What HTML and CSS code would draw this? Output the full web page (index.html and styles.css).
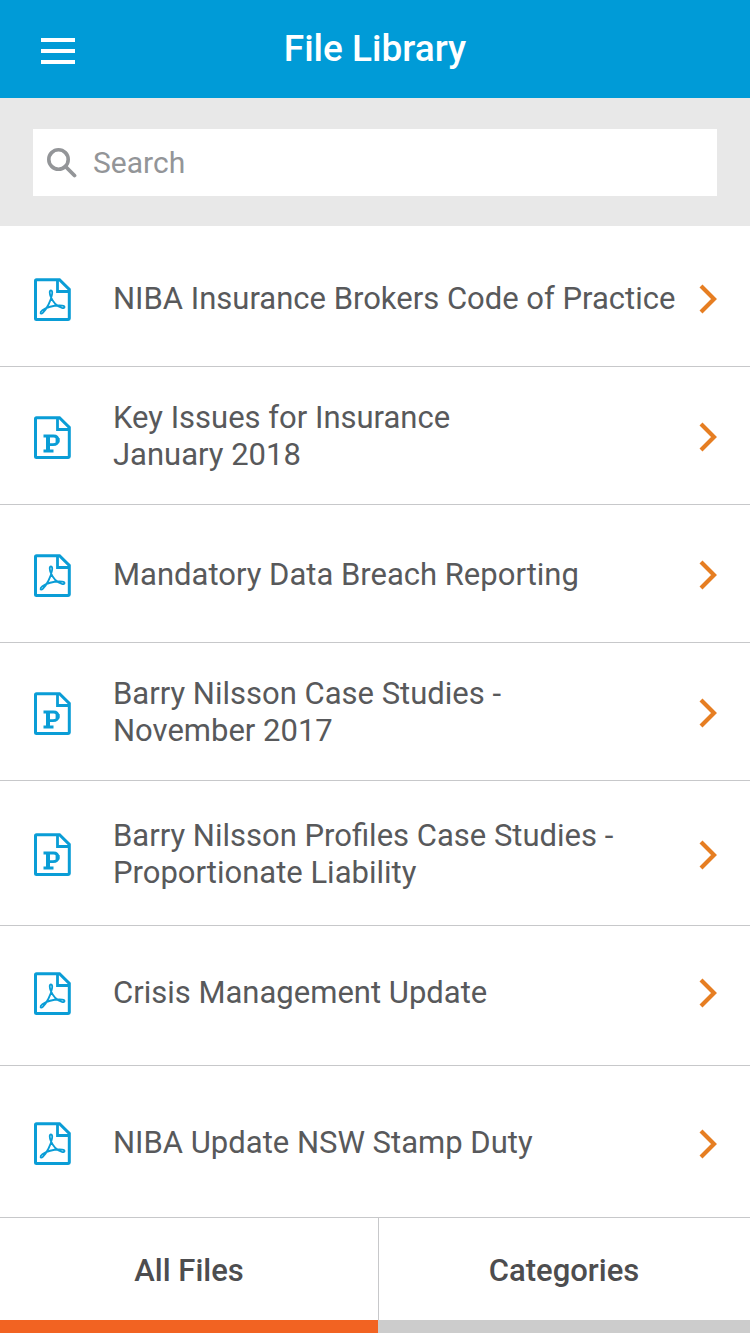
FILE: index.html
```html
<!DOCTYPE html>
<html lang="en">
<head>
  <meta charset="UTF-8" />
  <meta name="viewport" content="width=device-width, initial-scale=1" />
  <title>File Library</title>
  <link rel="stylesheet" href="styles.css">
</head>
<body>
  <svg class="sprite" aria-hidden="true">
    <symbol id="page" viewBox="0 0 38 43">
      <path d="M3.5 1.8H26.5L36.3 11.5V40.5Q36.3 41.4 35.3 41.4H3.5Q2.5 41.4 2.5 40.4V2.8Q2.5 1.8 3.5 1.8Z" fill="none" stroke="currentColor" stroke-width="3" />
      <path d="M24.5 2V13.5H36" fill="none" stroke="currentColor" stroke-width="2.8" />
    </symbol>
    <symbol id="pdf" viewBox="0 0 38 43">
      <use href="#page" />
      <path d="M18 12.5C16.2 12.5 16.5 15.7 17.8 18.8C19.8 23.7 24.2 28.5 29 29.9C32.2 30.7 32.4 27.9 29.2 27.6C22.5 27.2 14 29.1 9.4 32.2C6.4 34.4 7.4 37 9.8 34.8C13.8 31 18 22.5 19 16.7C19.5 14.1 19.2 12.5 18 12.5Z" fill="none" stroke="currentColor" stroke-width="1.8" stroke-linejoin="round" />
    </symbol>
    <symbol id="ppt" viewBox="0 0 38 43">
      <use href="#page" />
      <path d="M10.5 20H20.5Q25 20 25 24.2Q25 28.6 20 28.6H15M10.5 35H20.5" fill="none" stroke="currentColor" stroke-width="2.8" />
      <path d="M15 19V35.5M24.6 22V26.5" stroke="currentColor" stroke-width="4" />
    </symbol>
    <symbol id="chevron" viewBox="0 0 18 30">
      <path d="M2 2L15 15L2 28" fill="none" stroke="currentColor" stroke-width="4.2" />
    </symbol>
  </svg>

  <header class="topbar">
    <button class="menu-btn" type="button" aria-label="Menu">
      <span></span><span></span><span></span>
    </button>
    <h1>File Library</h1>
  </header>

  <form class="search">
    <label class="search-box">
      <svg class="search-icon" viewBox="0 0 30 30" aria-hidden="true">
        <circle cx="11.5" cy="11.5" r="9.7" fill="none" stroke="currentColor" stroke-width="3.6" />
        <path d="M18.5 18.5L27.5 27.5" stroke="currentColor" stroke-width="3.8" stroke-linecap="round" />
      </svg>
      <input type="search" placeholder="Search" aria-label="Search" />
    </label>
  </form>

  <main class="file-list">
    <a class="file file-first" href="#">
      <svg class="file-icon"><use href="#pdf" /></svg>
      <span class="file-name">NIBA Insurance Brokers Code of Practice</span>
      <svg class="chevron"><use href="#chevron" /></svg>
    </a>
    <a class="file" href="#">
      <svg class="file-icon"><use href="#ppt" /></svg>
      <span class="file-name">Key Issues for Insurance<br>January 2018</span>
      <svg class="chevron"><use href="#chevron" /></svg>
    </a>
    <a class="file" href="#">
      <svg class="file-icon"><use href="#pdf" /></svg>
      <span class="file-name">Mandatory Data Breach Reporting</span>
      <svg class="chevron"><use href="#chevron" /></svg>
    </a>
    <a class="file" href="#">
      <svg class="file-icon"><use href="#ppt" /></svg>
      <span class="file-name">Barry Nilsson Case Studies -<br>November 2017</span>
      <svg class="chevron"><use href="#chevron" /></svg>
    </a>
    <a class="file file-tall" href="#">
      <svg class="file-icon"><use href="#ppt" /></svg>
      <span class="file-name">Barry Nilsson Profiles Case Studies -<br>Proportionate Liability</span>
      <svg class="chevron"><use href="#chevron" /></svg>
    </a>
    <a class="file file-raised" href="#">
      <svg class="file-icon"><use href="#pdf" /></svg>
      <span class="file-name">Crisis Management Update</span>
      <svg class="chevron"><use href="#chevron" /></svg>
    </a>
    <a class="file file-last" href="#">
      <svg class="file-icon"><use href="#pdf" /></svg>
      <span class="file-name">NIBA Update NSW Stamp Duty</span>
      <svg class="chevron"><use href="#chevron" /></svg>
    </a>
  </main>

  <nav class="tabs">
    <button class="tab active" type="button">All Files</button>
    <button class="tab" type="button">Categories</button>
  </nav>
</body>
</html>
```
FILE: styles.css
```css
* { box-sizing: border-box; }
body {
  margin: 0;
  font-family: Roboto, "Liberation Sans", sans-serif;
  background: #fff; color: #58595b;
  display: flex; flex-direction: column;
  min-height: 100vh;
}
.sprite { display: none; }

.topbar {
  display: grid; grid-template-columns: 34px 1fr 34px; align-items: center;
  padding: 24px 41px;
  background: #009bd7; color: #fff;
}
.topbar h1 { margin: 0; font-size: 37px; line-height: 50px; font-weight: 500; text-align: center; }
.menu-btn {
  display: flex; flex-direction: column; gap: 7px;
  padding: 4px 0 0; border: none; background: none; cursor: pointer;
}
.menu-btn span { width: 34px; height: 4px; background: #fff; }

.search { padding: 31px 33px 30px; background: #e8e8e8; }
.search-box {
  display: flex; align-items: center; gap: 16px;
  height: 67px; padding: 0 14px;
  background: #fff; color: #939598;
}
.search-icon { width: 30px; height: 30px; flex: none; }
.search-box input {
  flex: 1; min-width: 0; padding: 0; border: none; outline: none;
  background: none; color: #58595b;
  font-family: inherit; font-size: 30px; line-height: 37px;
}
.search-box input::placeholder { color: #939598; opacity: 1; }

.file-list { flex: 1; }
.file {
  display: flex; align-items: center;
  min-height: 138px; padding: 3px 33px 0;
  border-bottom: 1px solid #c7c8ca;
  color: inherit; text-decoration: none;
}
.file-first { min-height: 141px; padding-top: 6px; }
.file-tall { min-height: 145px; }
.file-raised { min-height: 140px; padding: 0 33px 5px; }
.file-last { min-height: 152px; padding-top: 4px; }
.file-icon { width: 38px; height: 43px; flex: none; margin-right: 42px; color: #0a9dd6; }
.file-name { flex: 1; padding-bottom: 2px; font-size: 31px; line-height: 37px; }
.chevron { width: 18px; height: 30px; flex: none; color: #e67e22; }

.tabs { display: grid; grid-template-columns: 126fr 124fr; }
.tab {
  padding: 34px 0 31px;
  border: none; border-bottom: 13px solid #ccc;
  background: #fff; color: #4d4d4f;
  font-family: inherit; font-size: 31px; line-height: 37px; font-weight: 500;
  cursor: pointer;
}
.tab.active { border-bottom-color: #f26322; }
.tab + .tab { box-shadow: inset 1px 0 #c7c8ca; }
```
